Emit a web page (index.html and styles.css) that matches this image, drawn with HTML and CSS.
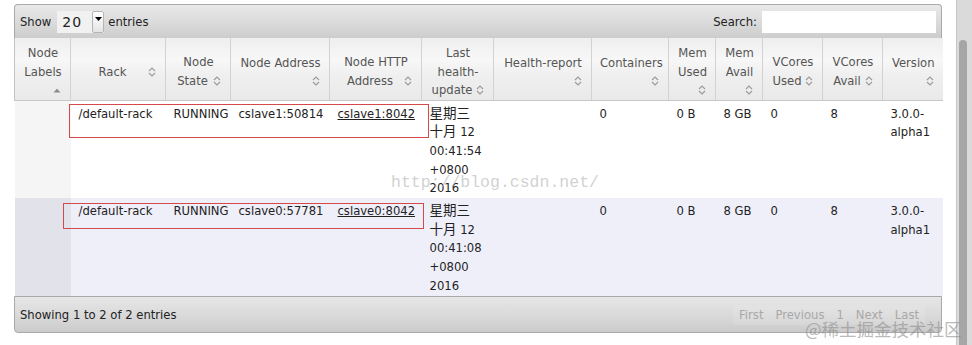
FILE: index.html
```html
<!DOCTYPE html>
<html lang="zh">
<head>
<meta charset="utf-8">
<title>Nodes</title>
<link rel="stylesheet" href="styles.css">
</head>
<body>
<div class="page">
  <div class="datatable">
    <div class="toolbar">
      <div class="length">
        <span>Show</span>
        <span class="select"><span class="sel-val">20</span><span class="sel-btn"><svg width="7" height="4" viewBox="0 0 7 4"><path d="M0 0H7L3.5 4Z" fill="#000"/></svg></span></span>
        <span>entries</span>
      </div>
      <div class="search">
        <span>Search:</span>
        <span class="input"></span>
      </div>
    </div>
    <table class="grid">
      <colgroup>
        <col class="c-labels"><col class="c-rack"><col class="c-state"><col class="c-addr"><col class="c-http"><col class="c-last"><col class="c-health"><col class="c-cont"><col class="c-mem"><col class="c-mem"><col class="c-vc"><col class="c-vc"><col class="c-vc">
      </colgroup>
      <thead>
        <tr>
          <th><div class="th-in">Node Labels<span class="sort sort-below"><svg width="8" height="5" viewBox="0 0 8 5"><path d="M0.5 4.5L4 0.8L7.5 4.5Z" fill="#8a8a8a"/></svg></span></div></th>
          <th><div class="th-in">Rack<span class="sort"><svg width="8" height="10" viewBox="0 0 8 10"><path d="M1 4L4 1L7 4M1 6L4 9L7 6" fill="none" stroke="#9a9a9a" stroke-width="1.1"/></svg></span></div></th>
          <th><div class="th-in">Node State<span class="sort"><svg width="8" height="10" viewBox="0 0 8 10"><path d="M1 4L4 1L7 4M1 6L4 9L7 6" fill="none" stroke="#9a9a9a" stroke-width="1.1"/></svg></span></div></th>
          <th><div class="th-in">Node Address<span class="sort"><svg width="8" height="10" viewBox="0 0 8 10"><path d="M1 4L4 1L7 4M1 6L4 9L7 6" fill="none" stroke="#9a9a9a" stroke-width="1.1"/></svg></span></div></th>
          <th><div class="th-in">Node HTTP Address<span class="sort"><svg width="8" height="10" viewBox="0 0 8 10"><path d="M1 4L4 1L7 4M1 6L4 9L7 6" fill="none" stroke="#9a9a9a" stroke-width="1.1"/></svg></span></div></th>
          <th><div class="th-in">Last health-update<span class="sort"><svg width="8" height="10" viewBox="0 0 8 10"><path d="M1 4L4 1L7 4M1 6L4 9L7 6" fill="none" stroke="#9a9a9a" stroke-width="1.1"/></svg></span></div></th>
          <th><div class="th-in">Health-report<span class="sort"><svg width="8" height="10" viewBox="0 0 8 10"><path d="M1 4L4 1L7 4M1 6L4 9L7 6" fill="none" stroke="#9a9a9a" stroke-width="1.1"/></svg></span></div></th>
          <th><div class="th-in">Containers<span class="sort"><svg width="8" height="10" viewBox="0 0 8 10"><path d="M1 4L4 1L7 4M1 6L4 9L7 6" fill="none" stroke="#9a9a9a" stroke-width="1.1"/></svg></span></div></th>
          <th><div class="th-in">Mem Used<span class="sort sort-below"><svg width="8" height="10" viewBox="0 0 8 10"><path d="M1 4L4 1L7 4M1 6L4 9L7 6" fill="none" stroke="#9a9a9a" stroke-width="1.1"/></svg></span></div></th>
          <th><div class="th-in">Mem Avail<span class="sort sort-below"><svg width="8" height="10" viewBox="0 0 8 10"><path d="M1 4L4 1L7 4M1 6L4 9L7 6" fill="none" stroke="#9a9a9a" stroke-width="1.1"/></svg></span></div></th>
          <th><div class="th-in">VCores Used<span class="sort"><svg width="8" height="10" viewBox="0 0 8 10"><path d="M1 4L4 1L7 4M1 6L4 9L7 6" fill="none" stroke="#9a9a9a" stroke-width="1.1"/></svg></span></div></th>
          <th><div class="th-in">VCores Avail<span class="sort sort-below"><svg width="8" height="10" viewBox="0 0 8 10"><path d="M1 4L4 1L7 4M1 6L4 9L7 6" fill="none" stroke="#9a9a9a" stroke-width="1.1"/></svg></span></div></th>
          <th><div class="th-in">Version<span class="sort"><svg width="8" height="10" viewBox="0 0 8 10"><path d="M1 4L4 1L7 4M1 6L4 9L7 6" fill="none" stroke="#9a9a9a" stroke-width="1.1"/></svg></span></div></th>
        </tr>
      </thead>
      <tbody>
        <tr class="odd">
          <td class="sorting-col"></td>
          <td class="nw">/default-rack</td>
          <td class="nw">RUNNING</td>
          <td class="nw">cslave1:50814</td>
          <td class="nw"><a href="#">cslave1:8042</a></td>
          <td><span class="cjk">星期三</span> <span class="nw"><span class="cjk">十月</span> 12</span> 00:41:54 +0800 2016</td>
          <td></td>
          <td>0</td>
          <td class="nw">0 B</td>
          <td class="nw">8 GB</td>
          <td>0</td>
          <td>8</td>
          <td>3.0.0-alpha1</td>
        </tr>
        <tr class="even">
          <td class="sorting-col"></td>
          <td class="nw">/default-rack</td>
          <td class="nw">RUNNING</td>
          <td class="nw">cslave0:57781</td>
          <td class="nw"><a href="#">cslave0:8042</a></td>
          <td><span class="cjk">星期三</span> <span class="nw"><span class="cjk">十月</span> 12</span> 00:41:08 +0800 2016</td>
          <td></td>
          <td>0</td>
          <td class="nw">0 B</td>
          <td class="nw">8 GB</td>
          <td>0</td>
          <td>8</td>
          <td>3.0.0-alpha1</td>
        </tr>
      </tbody>
    </table>
    <div class="footer">
      <div class="info">Showing 1 to 2 of 2 entries</div>
      <div class="paging">
        <span class="pbtn">First</span>
        <span class="pbtn">Previous</span>
        <span class="pbtn">1</span>
        <span class="pbtn">Next</span>
        <span class="pbtn">Last</span>
      </div>
    </div>
  </div>
  <div class="scrollbar"><div class="thumb"></div></div>
</div>
<div class="mark mark-1"></div>
<div class="mark mark-2"></div>
<div class="wm-csdn">http://blog.csdn.net/</div>
<div class="wm-juejin">@稀土掘金技术社区</div>
</body>
</html>
```

FILE: styles.css
```css
html, body {
  margin: 0;
  padding: 0;
  background: #fff;
}
body {
  font-family: "DejaVu Sans", Verdana, sans-serif;
  font-size: 11.6px;
  color: #222;
  position: relative;
  width: 972px;
  height: 345px;
  overflow: hidden;
}
.page {
  display: flex;
  align-items: flex-start;
}
.datatable {
  width: 928px;
  margin: 4px 0 0 14px;
}
.toolbar {
  height: 34px;
  box-sizing: border-box;
  border: 1px solid #a9a9a9;
  border-bottom: none;
  border-radius: 4px 4px 0 0;
  background: linear-gradient(#e9e9e9, #dadada 55%, #cdcdcd);
  display: flex;
  align-items: center;
  justify-content: space-between;
  padding: 0 5px 0 5px;
  color: #222;
}
.length {
  display: flex;
  align-items: center;
  gap: 4px;
}
.select {
  display: flex;
  height: 22px;
  margin: 0 0 0 2px;
  box-sizing: border-box;
  background: #f1f1f1;
}
.sel-val {
  width: 35px;
  box-sizing: border-box;
  padding-left: 5px;
  display: flex;
  align-items: center;
  font-size: 14px;
  letter-spacing: 1px;
}
.sel-btn {
  width: 12px;
  display: flex;
  align-items: flex-start;
  justify-content: center;
  padding-top: 5px;
  box-sizing: border-box;
  background: linear-gradient(#ffffff, #e4e4e4);
  border: 1px solid #b5b5b5;
  border-radius: 2px;
}
.search {
  display: flex;
  align-items: center;
  gap: 5px;
}
.input {
  display: block;
  width: 174px;
  height: 22px;
  background: #fff;
}
.grid {
  width: 928px;
  table-layout: fixed;
  border-collapse: collapse;
  border-spacing: 0;
}
.c-labels { width: 56px; }
.c-rack { width: 95px; }
.c-state { width: 65px; }
.c-addr { width: 99px; }
.c-http { width: 92px; }
.c-last { width: 72px; }
.c-health { width: 98px; }
.c-cont { width: 77px; }
.c-mem { width: 47px; }
.c-vc { width: 60px; }
.grid th {
  height: 62px;
  box-sizing: border-box;
  padding: 6px 7px 0 8px;
  font-weight: normal;
  color: #555;
  line-height: 18.3px;
  text-align: center;
  vertical-align: middle;
  background: linear-gradient(#eeeeee, #f7f7f7 35%, #efefef 60%, #e9e9e9);
  border-left: 1px solid #d2d2d2;
  border-bottom: 1px solid #c8c8c8;
}
.grid th:first-child {
  border-left: 1px solid #c4c4c4;
}
.th-in {
  text-align: center;
}
.sort {
  float: right;
  width: 12px;
  height: 18px;
  display: flex;
  align-items: center;
  justify-content: center;
}
.sort-below {
  clear: both;
}
.grid td {
  padding: 4px 2px 0 8px;
  line-height: 18.7px;
  vertical-align: top;
  color: #222;
  word-wrap: break-word;
}
.grid td.nw,
.nw {
  white-space: nowrap;
}
.grid tbody tr {
  height: 98px;
}
.odd td { background: #ffffff; }
.odd td.sorting-col { background: #f5f5f5; }
.even td { background: #efeffa; }
.even td.sorting-col { background: #e1e2ea; }
.grid a {
  color: #222;
  text-decoration: underline;
}
.cjk {
  font-family: "Noto Sans CJK SC", sans-serif;
  font-size: 13.5px;
  line-height: 12px;
}
.footer {
  height: 37px;
  box-sizing: border-box;
  border: 1px solid #a9a9a9;
  border-radius: 0 0 4px 4px;
  background: linear-gradient(#e6e6e6, #d9d9d9 55%, #cbcbcb);
  display: flex;
  align-items: center;
  justify-content: space-between;
  padding: 0 16px 0 5px;
}
.paging {
  display: flex;
  align-items: center;
}
.pbtn {
  padding: 3px 6px;
  color: #a8a8a8;
  background: rgba(255, 255, 255, 0.12);
}
.scrollbar {
  margin-left: 14px;
  width: 16px;
  height: 345px;
  box-sizing: border-box;
  background: #dadada;
  border-left: 1px solid #c6c6c6;
  padding-top: 40px;
  padding-left: 2px;
}
.thumb {
  width: 8px;
  height: 100%;
  background: #a6a6a6;
  border-radius: 4px 4px 0 0;
}
.mark {
  position: absolute;
  border: 1px solid #d5494a;
  box-sizing: border-box;
}
.mark-1 {
  left: 69px;
  top: 104px;
  width: 360px;
  height: 34px;
}
.mark-2 {
  left: 63px;
  top: 203px;
  width: 361px;
  height: 26px;
}
.wm-csdn {
  position: absolute;
  left: 391px;
  top: 173px;
  font-family: "Liberation Mono", monospace;
  font-size: 16.5px;
  color: rgba(170, 170, 170, 0.55);
}
.wm-juejin {
  position: absolute;
  left: 805px;
  top: 316px;
  font-family: "Noto Sans CJK SC", sans-serif;
  font-size: 17.5px;
  color: rgba(140, 140, 140, 0.6);
  white-space: nowrap;
}
```
